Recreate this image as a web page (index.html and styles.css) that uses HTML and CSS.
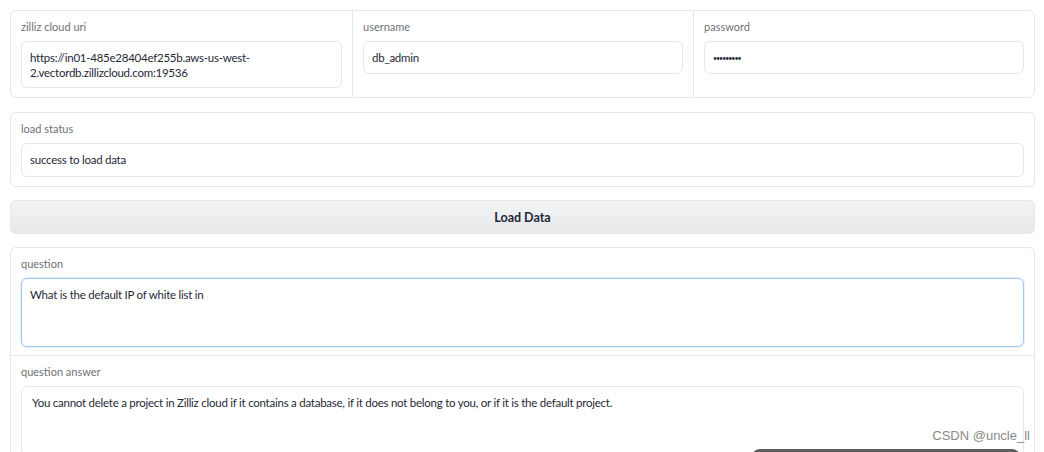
FILE: index.html
```html
<!DOCTYPE html>
<html>
<head>
<meta charset="utf-8">
<link rel="stylesheet" href="styles.css">
</head>
<body>
<div class="page">
  <div class="block row3">
    <div class="col">
      <div class="label">zilliz cloud uri</div>
      <div class="field two">https://in01-485e28404ef255b.aws-us-west-<br>2.vectordb.zillizcloud.com:19536</div>
    </div>
    <div class="col">
      <div class="label">username</div>
      <div class="field">db_admin</div>
    </div>
    <div class="col">
      <div class="label">password</div>
      <div class="field"><span class="pw">•••••••••</span></div>
    </div>
  </div>

  <div class="block">
    <div class="col">
      <div class="label">load status</div>
      <div class="field tall">success to load data</div>
    </div>
  </div>

  <button class="btn">Load Data</button>

  <div class="block last">
    <div class="col">
      <div class="label">question</div>
      <div class="field area focus">What is the default IP of white list in</div>
    </div>
    <div class="col sep">
      <div class="label">question answer</div>
      <div class="field area answer">You cannot delete a project in Zilliz cloud if it contains a database, if it does not belong to you, or if it is the default project.</div>
    </div>
  </div>
</div>
<div class="watermark">CSDN @uncle_ll</div>
<div class="darkbar"></div>
</body>
</html>
```

FILE: styles.css
```css
html, body {
  margin: 0;
  padding: 0;
  background: #ffffff;
  overflow: hidden;
}
body {
  font-family: Lato, "Open Sans", sans-serif;
  width: 1044px;
  height: 452px;
  position: relative;
}
.page {
  padding: 10px 9px 0 10px;
  display: flex;
  flex-direction: column;
  gap: 13px;
}
.block {
  border: 1px solid #e5e7eb;
  border-radius: 6px;
  background: #fff;
}
.row3 {
  display: grid;
  grid-template-columns: 1fr 1fr 1fr;
  margin-bottom: 1px;
}
.row3 .col + .col {
  border-left: 1px solid #e5e7eb;
}
.col {
  padding: 9px 10px 9px 10px;
}
.sep {
  border-top: 1px solid #e5e7eb;
  padding-top: 9px;
}
.label {
  font-size: 11px;
  line-height: 14px;
  color: #707075;
  margin-bottom: 7px;
}
.field {
  border: 1px solid #e5e7eb;
  border-radius: 6px;
  padding: 8px 8px 7px 8px;
  font-size: 11.5px;
  letter-spacing: -0.25px;
  line-height: 16px;
  color: #1f2937;
  background: #fff;
}
.two {
  line-height: 15px;
}
.tall {
  padding-bottom: 8px;
}
.pw {
  font-size: 7px;
  letter-spacing: -1px;
  vertical-align: 1px;
}
.area {
  height: 52px;
}
.focus {
  margin-top: 1px;
  border-color: #a5c8ec;
  box-shadow: 0 0 0 1px #e6f0fb;
}
.answer {
  padding-left: 10px;
}
.last {
  border-bottom: none;
  border-bottom-left-radius: 0;
  border-bottom-right-radius: 0;
}
.last .col:first-child {
  padding-bottom: 8px;
}
.btn {
  height: 34px;
  border: 1px solid #e5e7eb;
  border-radius: 6px;
  background: linear-gradient(180deg, #f3f4f6 0%, #e6e8ea 100%);
  font-family: Lato, "Open Sans", sans-serif;
  font-weight: 700;
  font-size: 12.5px;
  color: #1f2937;
  padding: 0;
}
.watermark {
  position: absolute;
  right: 14px;
  top: 428px;
  font-family: "Liberation Sans", Arial, sans-serif;
  font-size: 13px;
  color: #8a8a8a;
}
.darkbar {
  position: absolute;
  left: 752px;
  top: 449px;
  width: 268px;
  height: 12px;
  background: #5e5e5e;
  border-radius: 8px 8px 0 0;
}
```
